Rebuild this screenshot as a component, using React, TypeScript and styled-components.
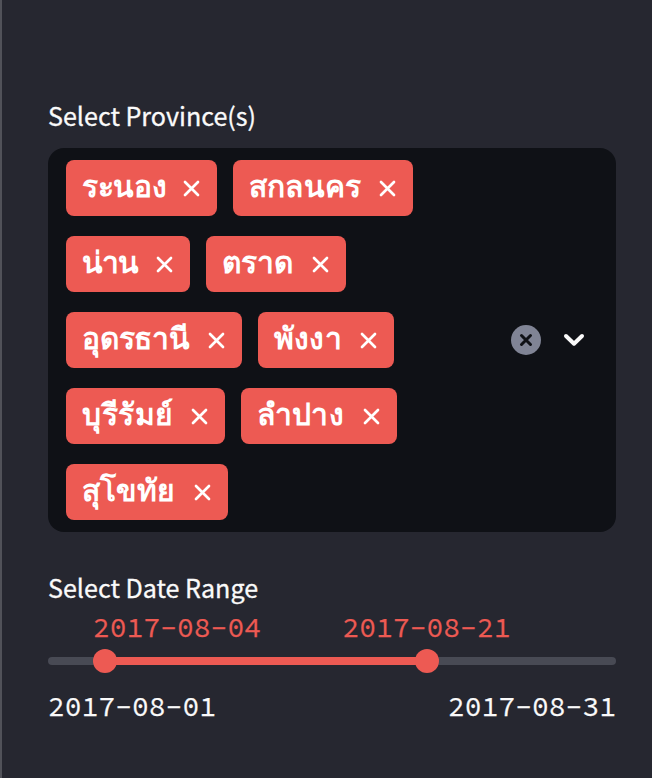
import React from 'react';
import styled, { createGlobalStyle } from 'styled-components';

const Global = createGlobalStyle`
  * { box-sizing: border-box; }
  body { margin: 0; background: #262730; }
`;
const Sidebar = styled.main`
  height: 778px;
  padding: 98px 36px 0 46px;
  border-left: 2px solid #515259;
  background: #262730;
  color: #fafafa;
  font-family: "Noto Sans CJK SC", sans-serif;
`;
const Label = styled.div`
  height: 34px;
  line-height: 34px;
  font-size: 25.1px;
  -webkit-text-stroke: 0.3px currentColor;
  white-space: nowrap;
`;
const Select = styled.div`
  display: flex;
  align-items: center;
  height: 384px;
  margin: 16px 0 38px;
  padding: 2px 30px 2px 10px;
  border-radius: 16px;
  background: #0f1116;
`;
const Tags = styled.div`
  flex: 1;
  display: flex;
  flex-direction: column;
  gap: 20px;
  padding-left: 8px;
`;
const TagRow = styled.div`
  display: flex;
  gap: 16px;
`;
const Tag = styled.div<{ $width: number }>`
  display: flex;
  align-items: center;
  justify-content: space-between;
  width: ${p => p.$width}px;
  height: 56px;
  padding: 0 17px 0 16px;
  border-radius: 8px;
  background: #ed5a53;
  color: #fff;
`;
const TagText = styled.span<{ $spacing: number }>`
  font: 700 30px/54px "Liberation Sans", sans-serif;
  letter-spacing: ${p => p.$spacing}px;
  white-space: nowrap;
  padding-bottom: 2px;
`;
const Controls = styled.div`
  display: flex;
  align-items: center;
  gap: 21px;
`;
const Icon = styled.svg`
  display: block;
  flex: none;
  fill: none;
  stroke-linecap: round;
  stroke-linejoin: round;
`;
const Dates = styled.div<{ $accent?: boolean }>`
  display: flex;
  justify-content: space-between;
  height: 32px;
  padding: ${p => (p.$accent ? '0 105.5px 0 45px' : '0')};
  color: ${p => (p.$accent ? '#ed5a53' : '#fafafa')};
  font: 28px/32px "Source Code Pro", "Liberation Mono", monospace;
  -webkit-text-stroke: 0.25px currentColor;
`;
const Slider = styled.div`
  display: grid;
  grid-template-columns: 45px 24px 298px 24px 1fr;
  align-items: center;
  height: 24px;
  margin: 6px 0 17px;
`;
const Rail = styled.div<{ $active?: boolean; $end?: boolean }>`
  height: 8px;
  margin: ${p => (p.$active ? '0 -4px' : p.$end ? '0 0 0 -4px' : '0 -4px 0 0')};
  border-radius: ${p => (p.$active ? '0' : '4px')};
  background: ${p => (p.$active ? '#ed5a53' : '#484a54')};
`;
const Thumb = styled.div`
  z-index: 1;
  width: 24px;
  height: 24px;
  border-radius: 50%;
  background: #ed5a53;
`;
const RangeField = styled.section`
  display: flex;
  flex-direction: column;
  ${Label} { margin-bottom: 7px; }
`;

const rows = [
  [{ name: 'ระนอง', width: 151, spacing: -0.3 }, { name: 'สกลนคร', width: 180, spacing: 0.2 }],
  [{ name: 'น่าน', width: 124, spacing: -1 }, { name: 'ตราด', width: 140, spacing: 0 }],
  [{ name: 'อุดรธานี', width: 176, spacing: -0.2 }, { name: 'พังงา', width: 136, spacing: 0.2 }],
  [{ name: 'บุรีรัมย์', width: 159, spacing: 0.6 }, { name: 'ลำปาง', width: 156, spacing: 0.2 }],
  [{ name: 'สุโขทัย', width: 162, spacing: 0.1 }],
];

export default function App() {
  return (
    <Sidebar>
      <Global />
      <Label>Select Province(s)</Label>
      <Select>
        <Tags>
          {rows.map((row, i) => (
            <TagRow key={i}>
              {row.map(t => (
                <Tag key={t.name} $width={t.width}>
                  <TagText $spacing={t.spacing}>{t.name}</TagText>
                  <Icon width="17" height="17" viewBox="0 0 17 17" stroke="#fff" strokeWidth="2.7">
                    <path d="M2 2L15 15M15 2L2 15" />
                  </Icon>
                </Tag>
              ))}
            </TagRow>
          ))}
        </Tags>
        <Controls>
          <Icon width="30" height="30" viewBox="0 0 30 30" stroke="#0f1116" strokeWidth="3">
            <circle cx="15" cy="15" r="15" fill="#808495" stroke="none" />
            <path d="M10.5 10.5L19.5 19.5M19.5 10.5L10.5 19.5" />
          </Icon>
          <Icon width="24" height="24" viewBox="0 0 24 24" stroke="#fafafa" strokeWidth="4">
            <path d="M4 8L12 15.7L20 8" />
          </Icon>
        </Controls>
      </Select>
      <RangeField>
        <Label>Select Date Range</Label>
        <Dates $accent><span>2017-08-04</span><span>2017-08-21</span></Dates>
        <Slider><Rail /><Thumb /><Rail $active /><Thumb /><Rail $end /></Slider>
        <Dates><span>2017-08-01</span><span>2017-08-31</span></Dates>
      </RangeField>
    </Sidebar>
  );
}
